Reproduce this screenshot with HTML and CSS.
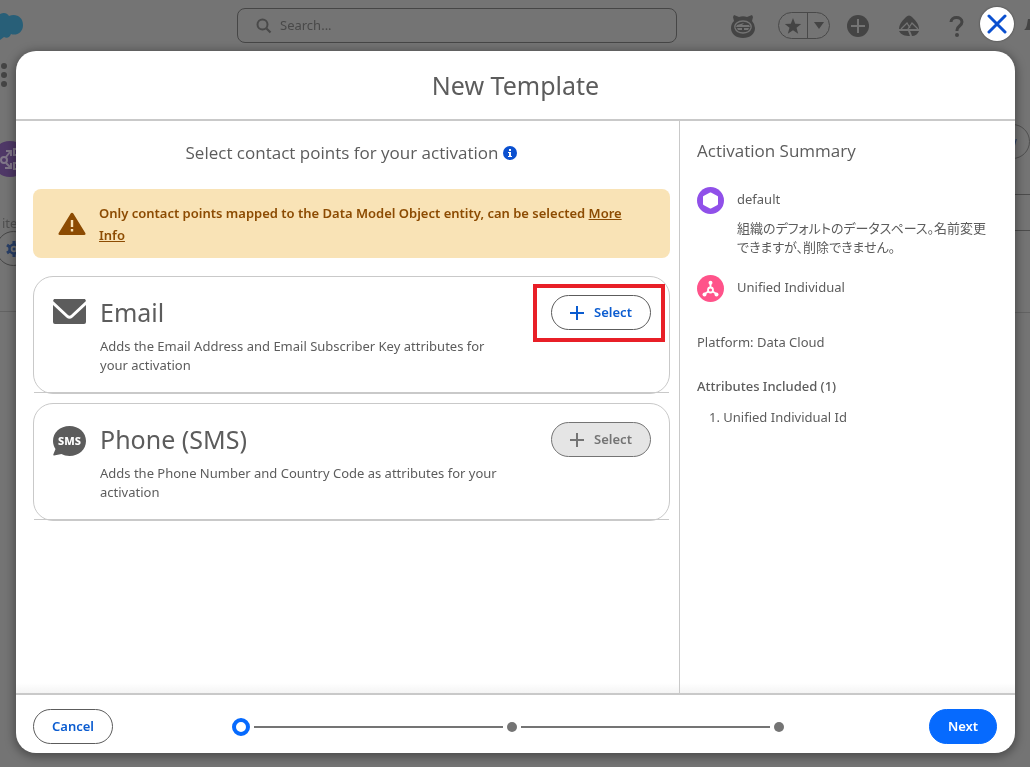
FILE: index.html
```
<!DOCTYPE html>
<html lang="en">
<head>
	<meta charset="utf-8">
	<title>New Template</title>
	<link rel="stylesheet" href="styles.css">
</head>
<body>
	<!-- dimmed application behind the dialog -->
	<div class="app">
		<header class="topbar">
			<svg class="logo" viewBox="0 0 24 34" width="24" height="34"><path fill="#285f78" d="M0 5c4-2 7-1 9 2 7-3 14 1 14 9 0 8-7 11-12 9-1 3-4 5-7 3l-4 3z"/></svg>
			<label class="search">
				<svg viewBox="0 0 16 16" width="16" height="16"><circle cx="6.500" cy="6.500" r="5" fill="none" stroke="#494949" stroke-width="2"/><path d="M10.500 10.500L14.500 14.500" stroke="#494949" stroke-width="2.200"/></svg>
				<input type="text" placeholder="Search..." aria-label="Search">
			</label>
			<div class="tools">
				<svg class="tool" viewBox="0 0 26 26" width="26" height="26"><path fill="#444" d="M4 2l5 2a11 11 0 0 1 8 0l5-2 1 2-1 4a11 11 0 0 1 3 7c0 6-5 10-12 10S1 21 1 15c0-3 1-5 3-7L3 4z"/><path fill="none" stroke="#747474" stroke-width="1.300" d="M5 15c-1-4 3-7 8-7s9 3 8 7c-1 3-4 5-8 5s-7-2-8-5z"/><path fill="#747474" d="M7 12l7-2-2 2h7l1 2H6zM7 15h5v2H8zM14 15h5l-1 2h-4z"/></svg>
				<div class="favorites">
					<button type="button" aria-label="Favorites"><svg viewBox="0 0 18 18" width="18" height="18"><path fill="#444" d="M9 1l2.200 5.700 6 .2-4.700 3.800 1.700 6L9 13.300 3.800 16.700l1.700-6L.8 6.900l6-.2z"/></svg></button>
					<button type="button" aria-label="Favorites list"><svg viewBox="0 0 10 8" width="10" height="8"><path fill="#444" d="M0 0h10L5 7z"/></svg></button>
				</div>
				<svg class="tool" viewBox="0 0 24 24" width="24" height="24"><circle cx="12" cy="12" r="11" fill="#444"/><path d="M12 5v14M5 12h14" stroke="#747474" stroke-width="2"/></svg>
				<svg class="tool" viewBox="0 0 24 24" width="24" height="24"><path fill="#444" d="M2 15C2 10 6 6 9 3c2-2 4-2 6 0 3 3 7 7 7 12z"/><path fill="none" stroke="#747474" stroke-width="1.300" d="M4 15l6-6 3 5M11 15l4-6 6 6"/><path fill="#444" d="M2 17h9l2 5c-5 0-9-1-11-5zM13 17h9c-1 3-4 5-7 5l-1-3z"/></svg>
				<svg class="tool" viewBox="0 0 24 24" width="24" height="24"><path fill="none" stroke="#444" stroke-width="3" d="M7 8c0-6 11-6 11 0 0 4-5 4-5 8v1"/><circle cx="13" cy="21" r="2" fill="#444"/></svg>
				<svg class="bell" viewBox="0 0 6 14" width="6" height="14"><path fill="#444" d="M0 11c3-2 3-6 4-11h2v11z"/></svg>
			</div>
		</header>
		<main class="page">
			<div class="page-left">
				<svg class="waffle" viewBox="0 0 8 26" width="8" height="26"><g fill="#444"><circle cx="4" cy="4" r="3"/><circle cx="4" cy="13" r="3"/><circle cx="4" cy="22" r="3"/></g></svg>
				<svg class="object-icon" viewBox="0 0 28 36" width="28" height="36"><circle cx="10" cy="18" r="18" fill="#4f3867"/><g fill="none" stroke="#807789" stroke-width="2"><circle cx="4" cy="19" r="3"/><path d="M6 16l4-5M6 22l4 4M6 10h5v5M5 27h6v-5"/><rect x="14" y="8" width="6" height="6"/><rect x="14" y="22" width="6" height="6"/></g></svg>
				<span class="items">ite</span>
				<button class="gear" type="button" aria-label="Settings"><svg viewBox="0 0 16 16" width="16" height="16"><circle cx="8" cy="8" r="4.500" fill="none" stroke="#293f67" stroke-width="2.500"/><path d="M8 0v3M8 13v3M1 4l3 2M12 10l3 2M1 12l3-2M12 6l3-2" stroke="#293f67" stroke-width="3"/><circle cx="8" cy="8" r="1.500" fill="#293f67"/></svg></button>
			</div>
			<div class="page-right">
				<button class="new" type="button">New</button>
			</div>
		</main>
	</div>

	<div class="backdrop">
		<section class="modal" role="dialog" aria-labelledby="modal-title">
			<button class="close" type="button" aria-label="Close"><svg viewBox="0 0 20 20" width="20" height="20"><path d="M2 2l16 16M18 2L2 18" stroke="#0b50d0" stroke-width="3" stroke-linecap="round"/></svg></button>
			<header class="modal-header">
				<h1 id="modal-title">New Template</h1>
			</header>
			<div class="modal-body">
				<div class="points">
					<h2>
						Select contact points for your activation
						<svg viewBox="0 0 14 14" width="14" height="14"><circle cx="7" cy="7" r="7" fill="#0b50d0"/><path fill="#fff" d="M6 3h2v2H6zM5 6h3v4h1v1H5v-1h1V7H5z"/></svg>
					</h2>
					<div class="warning">
						<svg viewBox="0 0 28 24" width="28" height="24"><path fill="#8c4b02" d="M12.700 1.500c.6-1 2-1 2.600 0l12 19.500c.6 1 0 2-1 2H1.700c-1 0-1.600-1-1-2z"/><path d="M14 8v7M14 17v2.500" stroke="#f9e3b6" stroke-width="2.400"/></svg>
						<p>Only contact points mapped to the Data Model Object entity, can be selected <a href="#">More Info</a></p>
					</div>
					<ul class="cards">
						<li>
							<article class="card">
								<svg viewBox="0 0 33 26" width="33" height="26"><path fill="#5c5c5c" d="M1 0h31l1 2-15 14q-1.500 1.400-3 0L0 2z"/><path fill="#5c5c5c" d="M0 6l13.500 12.500q3 2.500 6 0L33 6v17q0 2-2 2H2q-2 0-2-2z"/></svg>
								<div class="card-text">
									<h3>Email</h3>
									<p>Adds the Email Address and Email Subscriber Key attributes for your activation</p>
								</div>
								<div class="card-action marked">
									<button class="btn select" type="button"><svg viewBox="0 0 14 14" width="14" height="14"><path d="M7 0v14M0 7h14" stroke="currentColor" stroke-width="2"/></svg>Select</button>
								</div>
							</article>
						</li>
						<li>
							<article class="card">
								<svg viewBox="0 0 33 31" width="33" height="31"><path fill="#5c5c5c" d="M16.500 0C26 0 33 6.500 33 15s-7 15-16.500 15c-3 0-6-.7-8-2L1 29.500q-1 0-.7-1L2.500 23C1 20.700 0 18 0 15 0 6.500 7 0 16.500 0z"/><text x="16.500" y="19" text-anchor="middle" class="sms">SMS</text></svg>
								<div class="card-text">
									<h3>Phone (SMS)</h3>
									<p>Adds the Phone Number and Country Code as attributes for your activation</p>
								</div>
								<div class="card-action">
									<button class="btn select" type="button" disabled><svg viewBox="0 0 14 14" width="14" height="14"><path d="M7 0v14M0 7h14" stroke="currentColor" stroke-width="2"/></svg>Select</button>
								</div>
							</article>
						</li>
					</ul>
				</div>
				<aside class="summary">
					<h2>Activation Summary</h2>
					<div class="entry">
						<svg viewBox="0 0 27 27" width="27" height="27"><circle cx="13.500" cy="13.500" r="13.500" fill="#9050e9"/><path fill="#fff" stroke="#fff" stroke-width="2" stroke-linejoin="round" d="M13.500 6.500l6.500 3.500v7L13.500 20.500 7 17v-7z"/></svg>
						<div>
							<p>default</p>
							<p class="ja" lang="ja">組織のデフォルトのデータスペース。名前変更できますが、削除できません。</p>
						</div>
					</div>
					<div class="entry">
						<svg viewBox="0 0 27 27" width="27" height="27"><circle cx="13.500" cy="13.500" r="13.500" fill="#ff538a"/><g fill="none" stroke="#fff" stroke-width="1.800"><circle cx="13.500" cy="15" r="2.500"/><path d="M13.500 8v4.500M11.300 16.500L7.500 19M15.700 16.500l3.800 2.500"/></g><g fill="#fff"><circle cx="13.500" cy="7.800" r="2"/><circle cx="7.500" cy="19.500" r="2"/><circle cx="19.500" cy="19.500" r="2"/></g></svg>
						<p>Unified Individual</p>
					</div>
					<p class="platform">Platform: Data Cloud</p>
					<h3>Attributes Included (1)</h3>
					<ol>
						<li>Unified Individual Id</li>
					</ol>
				</aside>
			</div>
			<footer class="modal-footer">
				<button class="btn" type="button">Cancel</button>
				<div class="steps">
					<span class="step current"></span>
					<span class="line"></span>
					<span class="step"></span>
					<span class="line"></span>
					<span class="step"></span>
				</div>
				<button class="btn primary" type="button">Next</button>
			</footer>
		</section>
	</div>
</body>
</html>
```

FILE: styles.css
```
* {
	box-sizing: border-box;
}
body {
	margin: 0;
	min-height: 100vh;
	overflow: hidden;
	background: #747474;
	color: #5c5c5c;
	font: 13px/19px "Noto Sans", "Noto Sans CJK JP", sans-serif;
}
h1, h2, h3, p, ul, ol {
	margin: 0;
	padding: 0;
	font-weight: 400;
}
h2 {
	font-family: "Open Sans", sans-serif;
	font-size: 17px;
	line-height: 24px;
}
svg {
	display: block;
	flex: none;
}
button, input {
	font: inherit;
}

/* background app */
.app {
	position: fixed;
	inset: 0;
	display: flex;
	flex-direction: column;
}
.topbar {
	display: flex;
	align-items: center;
	height: 51px;
	flex: none;
}
.search {
	display: flex;
	align-items: center;
	gap: 8px;
	width: 440px;
	height: 35px;
	margin-left: 213px;
	padding: 0 18px;
	border: 1px solid #464646;
	border-radius: 8px;
}
.search input {
	flex: 1;
	padding: 0;
	border: 0;
	background: none;
	color: #444;
}
.search input::placeholder {
	color: #494949;
}
.tools {
	flex: 1;
	display: flex;
	align-items: center;
	margin-left: 53px;
}
.favorites {
	display: flex;
	width: 52px;
	height: 27px;
	margin: 0 16px 0 22px;
	border: 1px solid #494949;
	border-radius: 14px;
}
.favorites button {
	flex: 1 1 28px;
	display: flex;
	align-items: center;
	justify-content: center;
	padding: 0;
	border: 0;
	background: none;
}
.favorites button + button {
	flex-basis: 22px;
	border-left: 1px solid #494949;
}
.tool + .tool {
	margin-left: 27px;
}
.tool + .tool + .tool {
	margin-left: 23px;
}
.bell {
	margin-left: auto;
}
.page {
	flex: 1;
	display: flex;
	justify-content: space-between;
}
.page-left {
	width: 28px;
	height: 261px;
	padding-top: 11px;
	border-bottom: 1px solid #636363;
}
.object-icon {
	margin: 53px 0 0;
}
.items {
	display: block;
	margin: 39px 0 0 2px;
	color: #505050;
	line-height: 15px;
}
.gear {
	display: flex;
	align-items: center;
	width: 35px;
	height: 35px;
	margin-left: -4px;
	padding: 0 9px;
	border: 1px solid #464646;
	border-radius: 18px;
	background: none;
}
.page-right {
	display: flex;
	flex-direction: column;
	align-items: flex-end;
	gap: 35px;
	width: 80px;
	height: 262px;
	padding-top: 73px;
	border-bottom: 1px solid #636363;
}
.new {
	height: 35px;
	padding: 0 12px 0 18px;
	border: 1px solid #505050;
	border-radius: 18px;
	background: none;
	color: #293f67;
}
.page-right::after {
	content: "";
	width: 80px;
	height: 35px;
	border: solid #4c4c4c;
	border-width: 1px 0;
}

/* dialog */
.backdrop {
	position: relative;
	display: flex;
	min-height: 100vh;
	padding: 51px 15px 14px 16px;
}
.modal {
	position: relative;
	flex: 1;
	display: flex;
	flex-direction: column;
	border-radius: 20px;
	background: #fff;
	box-shadow: 0 2px 10px 2px rgba(0, 0, 0, .35);
}
.close {
	position: absolute;
	top: -44px;
	right: 1px;
	display: flex;
	align-items: center;
	justify-content: center;
	width: 34px;
	height: 34px;
	padding: 0;
	border: 0;
	border-radius: 50%;
	background: #fff;
	box-shadow: 0 0 2px rgba(0, 0, 0, .5);
}
.modal-header {
	padding: 18px 16px;
	border-bottom: 2px solid #c9c9c9;
	text-align: center;
}
.modal-header h1 {
	font-size: 25px;
	line-height: 32px;
}
.modal-body {
	flex: 1;
	display: flex;
	background: linear-gradient(to top, #f4f4f4, #fff 10px);
}
.points {
	flex: 1;
	padding: 20px 9px 20px 17px;
}
.points h2 {
	display: flex;
	align-items: center;
	justify-content: center;
	gap: 5px;
}
.warning {
	display: flex;
	align-items: center;
	gap: 13px;
	margin: 24px 0 18px;
	padding: 13px 24px 12px 25px;
	border-radius: 8px;
	background: #f9e3b6;
	color: #8c4b02;
}
.warning p {
	font-weight: 600;
	line-height: 22px;
}
.warning a {
	color: inherit;
}
.cards {
	display: flex;
	flex-direction: column;
	gap: 10px;
	list-style: none;
}
.cards li {
	margin: 0 1px;
	border-bottom: 1px solid #c9c9c9;
}
.card {
	display: flex;
	align-items: flex-start;
	margin: 0 -1px -2px;
	padding: 18px;
	border: 1px solid #c9c9c9;
	border-radius: 20px;
}
.card > svg {
	margin: 4px 0 0 1px;
}
.card-text {
	flex: 1;
	margin: 1px 42px 0 14px;
}
.card-text h3 {
	margin-bottom: 9px;
	font-size: 25px;
	line-height: 32px;
}
.sms {
	fill: #fff;
	font-size: 11px;
	font-weight: 800;
}
.card-action {
	position: relative;
}
.marked::after {
	content: "";
	position: absolute;
	inset: -11px -14px -12px -18px;
	border: 4px solid #e81f27;
	pointer-events: none;
}
.btn {
	display: flex;
	align-items: center;
	justify-content: center;
	height: 35px;
	padding: 0 17px;
	border: 1px solid #5c5c5c;
	border-radius: 18px;
	background: #fff;
	color: #0b5cd0;
	font-weight: 600;
}
.select {
	gap: 10px;
	width: 100px;
}
.modal-footer .btn {
	min-width: 68px;
}
.modal-footer .btn:first-child {
	min-width: 80px;
}
.btn:disabled {
	border-color: #747474;
	background: #e5e5e5;
	color: #747474;
}
.primary {
	border-color: #066afe;
	background: #066afe;
	color: #fff;
}
.summary {
	width: 336px;
	padding: 18px 20px 18px 17px;
	border-left: 1px solid #c9c9c9;
}
.summary h2 {
	margin-bottom: 24px;
}
.entry {
	display: flex;
	gap: 13px;
	margin-bottom: 18px;
}
.entry p {
	padding-top: 3px;
}
.entry .ja {
	padding-top: 10px;
	font-feature-settings: "palt";
}
.platform {
	margin: 31px 0 25px;
}
.summary h3 {
	font-size: 13px;
	font-weight: 500;
}
.summary ol {
	margin-top: 12px;
	padding-left: 12px;
	list-style-position: inside;
}
.modal-footer {
	display: flex;
	align-items: center;
	padding: 14px 18px 9px 17px;
	border-top: 2px solid #c9c9c9;
}
.steps {
	flex: 1;
	display: flex;
	align-items: center;
	gap: 4px;
	margin: 0 145px 0 119px;
}
.step {
	width: 10px;
	height: 10px;
	border-radius: 50%;
	background: #747474;
}
.current {
	width: 18px;
	height: 18px;
	border: 4px solid #066afe;
	background: #fff;
}
.line {
	flex: 1;
	height: 2px;
	background: #747474;
}
```
